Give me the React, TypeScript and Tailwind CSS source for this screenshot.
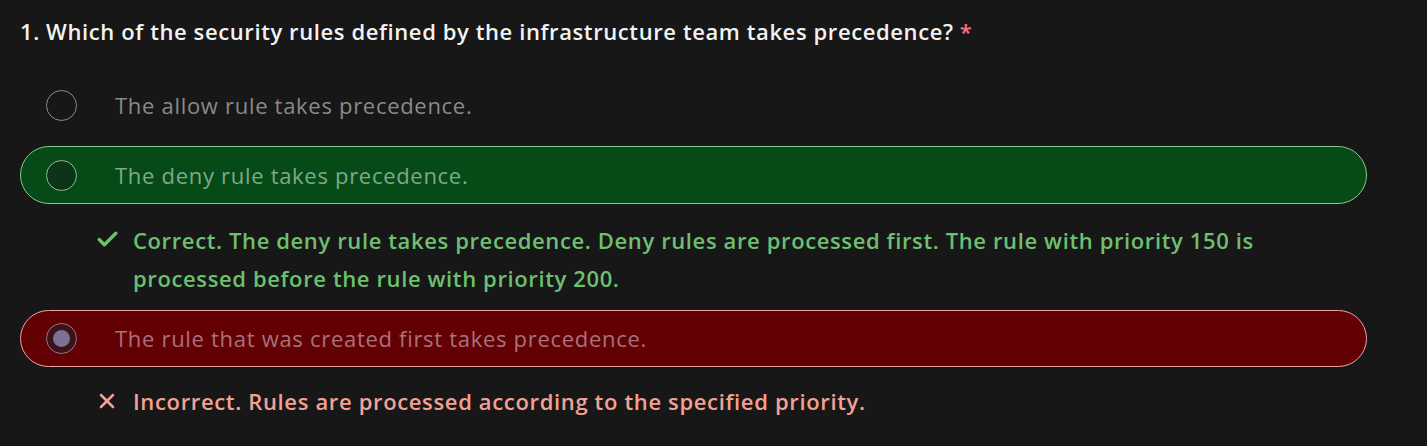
import { Check, X } from 'lucide-react';

const font = { fontFamily: '"Open Sans", "Noto Sans", sans-serif' };

const Radio = ({ state }: { state: 'idle' | 'correct' | 'wrong' }) => {
  if (state === 'wrong') {
    return (
      <span className="flex h-[31px] w-[31px] shrink-0 items-center justify-center rounded-full border border-[#8a7a92] bg-[#3e1119]">
        <span className="h-[17px] w-[17px] rounded-full bg-[#7a7294]" />
      </span>
    );
  }
  if (state === 'correct') {
    return <span className="h-[31px] w-[31px] shrink-0 rounded-full border border-[#8fb894] bg-[#0d3318]" />;
  }
  return <span className="h-[31px] w-[31px] shrink-0 rounded-full border border-[#8a8a8a]" />;
};

const App = () => {
  return (
    <div className="min-h-[446px] w-full bg-[#171717] pt-[15px] pl-[20px] pr-[60px]" style={font}>
      <h1 className="text-[22px] font-semibold leading-[32px] tracking-[0.6px] text-[#f2f2f2]">
        1. Which of the security rules defined by the infrastructure team takes precedence?{' '}
        <span className="text-[#f1707b]">*</span>
      </h1>

      <div className="mt-[30px] flex flex-col">
        {/* option 1 */}
        <div className="flex h-[57px] items-center rounded-full border border-transparent pl-[25px]">
          <Radio state="idle" />
          <span className="ml-[38px] text-[22px] tracking-[0.7px] text-[#8a8a8a]">The allow rule takes precedence.</span>
        </div>

        {/* option 2 - correct */}
        <div className="mt-[12px] flex h-[58px] items-center rounded-full border border-[#86c98a] bg-[#054a17] pl-[25px]">
          <Radio state="correct" />
          <span className="ml-[38px] text-[22px] tracking-[0.7px] text-[#7fa98a]">The deny rule takes precedence.</span>
        </div>

        <div className="mt-[17px] flex items-start pl-[75px]">
          <Check className="mt-[6px] h-[25px] w-[25px] shrink-0 text-[#6cc070]" strokeWidth={3.2} />
          <p className="ml-[13px] w-[1160px] text-[22px] font-semibold leading-[38px] tracking-[0.62px] text-[#6cc070]">
            Correct. The deny rule takes precedence. Deny rules are processed first. The rule with priority 150 is
            processed before the rule with priority 200.
          </p>
        </div>

        {/* option 3 - wrong */}
        <div className="mt-[13px] flex h-[57px] items-center rounded-full border border-[#f0a3a3] bg-[#630004] pl-[25px]">
          <Radio state="wrong" />
          <span className="ml-[38px] text-[22px] tracking-[0.7px] text-[#a8727a]">The rule that was created first takes precedence.</span>
        </div>

        <div className="mt-[15px] flex items-center pl-[75px]">
          <X className="h-[24px] w-[24px] shrink-0 text-[#f4a195]" strokeWidth={2.5} />
          <p className="ml-[14px] text-[22px] font-semibold leading-[38px] tracking-[0.65px] text-[#f4a195]">
            Incorrect. Rules are processed according to the specified priority.
          </p>
        </div>
      </div>
    </div>
  );
};

export default App;
